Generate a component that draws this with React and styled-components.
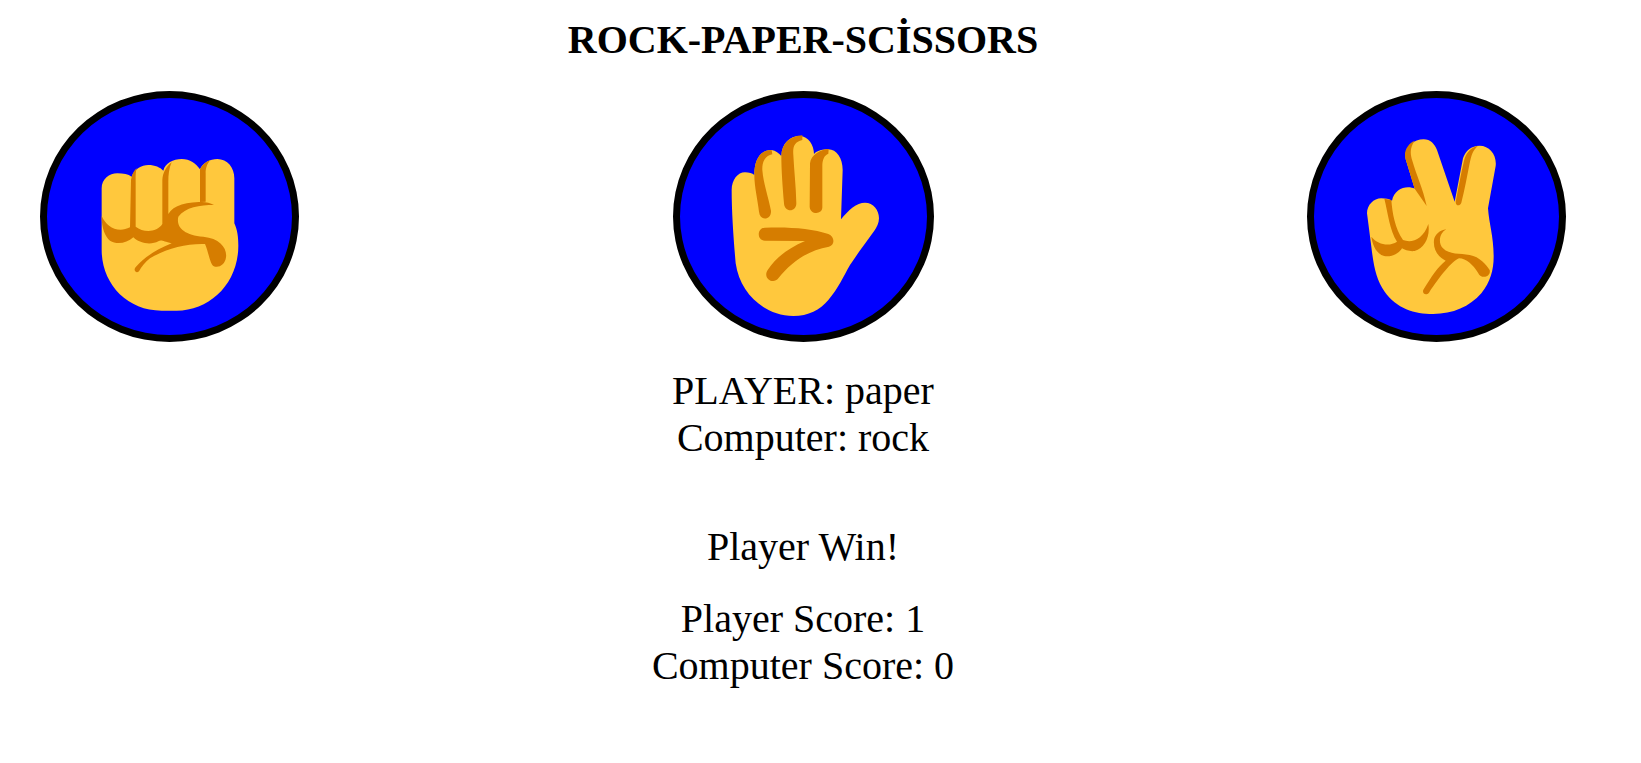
import styled, { createGlobalStyle } from "styled-components";

const Y = "#FFC83D";
const D = "#D67D00";

const GlobalStyle = createGlobalStyle`
	body {
		margin: 0;
		background: #fff;
		color: #000;
		font-family: "Liberation Serif", "Times New Roman", serif;
	}
`;

const RockIcon = () => (
	<HandSvg viewBox="51 54 735 711">
		<path
			fill={Y}
			d="M215 325C215 297 238 280 262 280C280 280 295 283 305 290C312 268 335 255 355 255C375 255 390 262 400 272C405 250 430 237 455 237C480 237 498 250 510 268C518 248 540 237 562 237C592 237 613 262 613 295L613 430C622 450 625 470 625 497C625 610 540 692 440 692L395 692C290 692 215 610 215 510Z"
		/>
		<path
			fill={D}
			d="M215 408C228 438 262 462 300 442L303 300C305 285 312 272 320 264C316 280 317 295 317 310L317 440C340 458 380 458 397 432L397 300C398 278 410 258 425 247C417 265 415 285 415 305L415 402C430 375 470 365 527 365L527 280C527 265 530 255 540 241C532 245 520 250 510 268L510 366C525 365 540 368 552 375C510 375 465 382 445 410C438 440 460 465 520 470C570 475 592 505 588 532C585 555 565 566 550 558C540 550 535 515 525 492C470 490 410 505 360 535C345 547 335 560 327 574C318 582 308 570 318 560C340 535 375 510 425 490C400 485 395 478 385 484C365 495 330 492 310 472C290 490 260 495 240 482C225 470 215 445 215 408Z"
		/>
	</HandSvg>
);

const PaperIcon = () => (
	<HandSvg viewBox="45 54 741 711">
		<path
			fill={Y}
			d="M200 330C200 300 218 277 240 277C252 277 262 280 268 285C268 240 285 210 320 210C332 212 342 220 349 228C350 190 375 168 405 168C430 170 447 195 447 222C455 212 475 208 490 208C515 208 533 235 533 270L528 418C550 390 575 368 600 368C625 368 642 390 642 415C642 430 635 442 628 452C600 490 575 525 555 555C535 590 520 625 490 660C465 690 430 708 385 708C295 705 225 640 212 550C206 480 200 400 200 330Z"
		/>
		<path
			fill={D}
			d="M268 285C268 240 285 210 320 210L322 223C300 228 291 245 292 270C295 310 310 350 318 392C320 420 285 425 282 395C278 360 268 320 268 285ZM349 228C350 190 375 168 412 166L412 180C388 186 383 200 385 225C387 270 393 320 394 370C394 398 358 398 357 370C353 320 349 270 349 228ZM435 250C438 225 465 208 491 207L490 221C478 225 472 240 472 255L472 382C472 405 435 405 434 380ZM300 443C370 440 440 445 490 462C510 470 510 495 492 500C430 510 380 545 340 595C325 615 292 595 308 570C335 530 370 505 420 483L300 482C275 482 275 444 300 443Z"
		/>
	</HandSvg>
);

const ScissorsIcon = () => (
	<HandSvg viewBox="43 54 735 711">
		<path
			fill={Y}
			d="M202 400C202 375 222 355 245 355C258 355 268 357 277 362C282 335 305 322 325 322C333 322 340 324 345 326L318 238C312 205 340 178 372 178C392 178 405 192 412 210L465 365L490 235C497 212 515 197 540 197C570 197 592 225 588 258L565 385C568 430 582 470 582 530C582 570 572 605 545 640C510 680 460 702 400 702C345 702 290 685 255 635C230 600 222 560 215 500Z"
		/>
		<path
			fill={D}
			d="M318 238C310 215 325 190 345 182C332 200 330 220 338 242C350 285 370 325 381 378L345 326ZM468 365C480 305 487 265 495 235C502 215 515 202 535 197C520 210 515 225 510 250C502 290 495 330 485 368C480 380 468 378 468 365ZM254 356L275 360C278 400 286 445 310 480C335 490 370 480 386 432C392 470 375 505 345 513C330 515 315 510 307 505C295 525 265 535 245 525C225 512 218 490 215 470C235 495 270 500 292 485C270 450 265 400 254 356ZM440 448C418 460 415 490 430 505C450 525 480 520 510 525C540 530 560 555 570 570C575 590 545 600 535 578C520 555 500 535 478 535C455 545 420 590 388 638C378 650 365 638 372 628C395 590 415 560 438 542C415 530 400 510 403 480C405 465 420 450 440 448Z"
		/>
	</HandSvg>
);

const App = () => (
	<Page>
		<GlobalStyle />
		<Title>ROCK-PAPER-SCİSSORS</Title>
		<Choices>
			<ChoiceButton>
				<RockIcon />
			</ChoiceButton>
			<ChoiceButton $wide>
				<PaperIcon />
			</ChoiceButton>
			<ChoiceButton>
				<ScissorsIcon />
			</ChoiceButton>
		</Choices>
		<Picks>
			<div>PLAYER: paper</div>
			<div>Computer: rock</div>
		</Picks>
		<Result>Player Win!</Result>
		<Scores>
			<div>Player Score: 1</div>
			<div>Computer Score: 0</div>
		</Scores>
	</Page>
);

export default App;

const Page = styled.div`
	width: 1606px;
	display: flex;
	flex-direction: column;
	align-items: center;
	text-align: center;
	font-size: 40px;
	line-height: 47px;
`;

const Title = styled.h1`
	margin: 17px 0 28px;
	font-size: 40px;
	line-height: 46px;
	font-weight: bold;
`;

const Choices = styled.div`
	width: 100%;
	box-sizing: border-box;
	padding: 0 40px;
	display: flex;
	justify-content: space-between;
`;

const ChoiceButton = styled.button`
	width: ${(props) => (props.$wide ? "261px" : "259px")};
	height: 251px;
	padding: 0;
	box-sizing: border-box;
	border: 7px solid #000;
	border-radius: 50%;
	background: #00f;
	overflow: hidden;
	cursor: pointer;
	display: flex;
`;

const HandSvg = styled.svg`
	width: 100%;
	height: 100%;
`;

const Picks = styled.div`
	margin-top: 25px;
`;

const Result = styled.div`
	margin-top: 62px;
`;

const Scores = styled.div`
	margin-top: 25px;
`;
